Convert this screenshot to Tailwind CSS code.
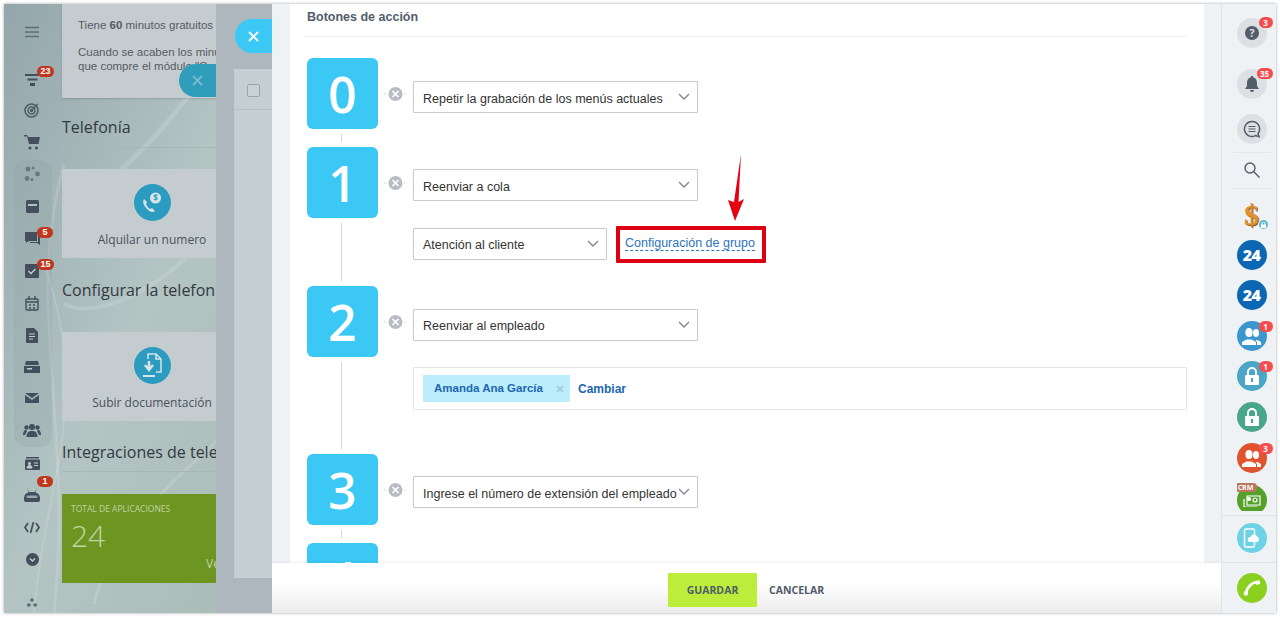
<!DOCTYPE html>
<html lang="es">
<head>
<meta charset="utf-8">
<script src="https://cdn.jsdelivr.net/npm/@tailwindcss/browser@4"></script>
<title>Botones de acción</title>
</head>
<body class="bg-white">
<div class="w-[1280px] h-[618px] bg-white overflow-hidden pt-[4px] pl-[4px] font-['Liberation_Sans',sans-serif]">
<div class="w-[1272px] h-[609px] flex overflow-hidden shadow-[0_0_3px_rgba(0,0,0,0.35)]">

  <!-- dimmed left area -->
  <div class="relative w-[268px] h-full flex bg-gradient-to-br from-[#93a6ab] via-[#b3c4c3] to-[#a9bab6] overflow-hidden">
    <svg class="absolute inset-0" width="268" height="609" fill="none" stroke="#ffffff" stroke-opacity="0.14"><path d="M50 609C70 420 20 300 60 160" stroke-width="3"/><path d="M30 609C40 480 90 400 40 260" stroke-width="2"/><path d="M60 210C120 170 170 120 220 40" stroke-width="5"/><path d="M60 300C100 320 180 270 220 210" stroke-width="4"/><path d="M90 600C110 520 180 470 220 430" stroke-width="3"/></svg>
    <div class="absolute left-[10px] top-[156px] w-[38px] h-[287px] rounded-[12px] bg-[#8fa0a5]/25"></div>

    <!-- sidebar icons -->
    <nav class="relative w-[56px] shrink-0 flex flex-col items-center pt-[12px] text-[#4b5563] *:shrink-0">
      <div class="h-8 w-8 flex items-center justify-center">
        <svg width="16" height="12" fill="none" stroke="#5f6b75" stroke-width="1.6"><path d="M1 1.5h14M1 6h14M1 10.5h14"/></svg>
      </div>
      <div class="relative h-8 w-8 mt-4 flex items-center justify-center">
        <svg width="15" height="12" fill="#444e5c"><path d="M0 0h15v2H0zM2.500 4.500h10v2h-10zM5 9h5v3H5z"/></svg>
        <span class="absolute left-[21px] top-[2px] h-[11px] w-[17px] rounded-full bg-[#c1361d] text-white text-[9px] leading-[11px] text-center font-bold">23</span>
      </div>
      <div class="h-8 w-8 -mt-[2px] flex items-center justify-center">
        <svg width="16" height="16" viewBox="0 0 16 16" fill="none" stroke="#515c69" stroke-width="1.5"><circle cx="7.500" cy="8.500" r="6.500"/><circle cx="7.500" cy="8.500" r="3.500"/><circle cx="7.500" cy="8.500" r="1" fill="#515c69"/><path d="M8 8l6-6" /></svg>
      </div>
      <div class="h-8 w-8 flex items-center justify-center">
        <svg width="16" height="15" viewBox="0 0 16 15" fill="#444e5c"><path d="M0 0h3l1 2h12l-1.500 7H5L3 1.500H0z"/><circle cx="6" cy="13" r="1.500"/><circle cx="12.500" cy="13" r="1.500"/></svg>
      </div>
      <div class="h-8 w-8 flex items-center justify-center">
        <svg width="16" height="16" viewBox="0 0 16 16" fill="#6b7681"><circle cx="4" cy="3" r="2.400"/><circle cx="13.500" cy="8" r="2.400"/><circle cx="3" cy="12.500" r="2.400"/><circle cx="9" cy="2" r="1.500"/><circle cx="8" cy="13.500" r="1.500"/></svg>
      </div>
      <div class="h-8 w-8 flex items-center justify-center">
        <svg width="13" height="13" viewBox="0 0 13 13"><rect width="13" height="13" rx="1.500" fill="#444e5c"/><rect x="2" y="4" width="9" height="2" fill="#b5c2c4"/></svg>
      </div>
      <div class="relative h-8 w-8 mt-[1px] flex items-center justify-center">
        <svg width="15" height="14" viewBox="0 0 15 14" fill="#444e5c"><path d="M0 0h12v9H4l-3 2V9H0z"/><path d="M13 3h2v10l-3-2H5v-1h8z"/></svg>
        <span class="absolute left-[21px] top-[4px] h-[11px] w-[16px] rounded-full bg-[#c1361d] text-white text-[9px] leading-[11px] text-center font-bold">5</span>
      </div>
      <div class="relative h-8 w-8 flex items-center justify-center">
        <svg width="14" height="14" viewBox="0 0 14 14"><rect width="14" height="14" rx="1" fill="#444e5c"/><path d="M3.500 7l2.500 2.500 4.500-4.500" fill="none" stroke="#c4d0d0" stroke-width="1.400"/></svg>
        <span class="absolute left-[21px] top-[4px] h-[11px] w-[17px] rounded-full bg-[#c1361d] text-white text-[9px] leading-[11px] text-center font-bold">15</span>
      </div>
      <div class="h-8 w-8 flex items-center justify-center">
        <svg width="14" height="15" viewBox="0 0 14 15" fill="none" stroke="#444e5c" stroke-width="1.400"><rect x="1" y="3" width="12" height="11" rx="1"/><path d="M1 6h12M4 0v3M10 0v3M4 9h2M8 9h2M4 12h2M8 12h2"/></svg>
      </div>
      <div class="h-8 w-8 flex items-center justify-center">
        <svg width="12" height="15" viewBox="0 0 12 15"><path d="M1 0h7l4 4v10a1 1 0 0 1-1 1H1a1 1 0 0 1-1-1V1a1 1 0 0 1 1-1z" fill="#444e5c"/><path d="M3 6h6M3 8.500h6M3 11h4" stroke="#c0cdcd"/></svg>
      </div>
      <div class="h-8 w-8 flex items-center justify-center">
        <svg width="16" height="12" viewBox="0 0 16 12" fill="#444e5c"><path d="M2 0h12l1 4H1z"/><path d="M0 5h16v7H0z"/><rect x="3" y="7" width="5" height="1.500" fill="#c0cdcd"/></svg>
      </div>
      <div class="h-8 w-8 -mt-[1px] flex items-center justify-center">
        <svg width="14" height="10" viewBox="0 0 14 10" fill="#444e5c"><path d="M0 0h14L7 5z"/><path d="M0 2l7 5 7-5v8H0z"/></svg>
      </div>
      <div class="h-8 w-8 flex items-center justify-center">
        <svg width="18" height="13" viewBox="0 0 18 13" fill="#444e5c"><circle cx="9" cy="3" r="3"/><path d="M3.500 13c0-4 2-6 5.500-6s5.500 2 5.500 6z"/><circle cx="3.500" cy="3.500" r="2.200"/><circle cx="14.500" cy="3.500" r="2.200"/><path d="M0 11c0-3 1-5 3-5l1 1-2 4zM18 11c0-3-1-5-3-5l-1 1 2 4z"/></svg>
      </div>
      <div class="h-8 w-8 mt-[1px] flex items-center justify-center">
        <svg width="15" height="13" viewBox="0 0 15 13"><path d="M1 0h13v1.500H1z" fill="#444e5c"/><rect y="2.500" width="15" height="10.500" rx="1" fill="#444e5c"/><circle cx="4.500" cy="6.500" r="1.500" fill="#c0cdcd"/><path d="M2 11c0-2 1-2.500 2.500-2.500S7 9 7 11zM9 6h4M9 8.500h4" fill="#c0cdcd" stroke="#c0cdcd"/></svg>
      </div>
      <div class="relative h-8 w-8 flex items-center justify-center">
        <svg width="16" height="14" viewBox="0 0 16 14"><path d="M3 0l2 4h6l2-4-1.500 4.500C14 5 16 7 16 10v2a2 2 0 0 1-2 2H2a2 2 0 0 1-2-2v-2c0-3 2-5 4.500-5.500z" fill="#444e5c"/><rect x="2.500" y="7.500" width="11" height="2.500" rx="1.200" fill="#98a5aa"/></svg>
        <span class="absolute left-[21px] top-[-3px] h-[11px] w-[16px] rounded-full bg-[#c1361d] text-white text-[9px] leading-[11px] text-center font-bold">1</span>
      </div>
      <div class="h-8 w-8 flex items-center justify-center">
        <svg width="16" height="11" viewBox="0 0 16 11" fill="none" stroke="#444e5c" stroke-width="1.700"><path d="M4 1L1 5.500 4 10M12 1l3 4.500L12 10M9.500 0L6.500 11"/></svg>
      </div>
      <div class="h-8 w-8 flex items-center justify-center">
        <svg width="13" height="13" viewBox="0 0 13 13"><circle cx="6.500" cy="6.500" r="6.500" fill="#444e5c"/><path d="M4 5.500l2.500 2.500L9 5.500" fill="none" stroke="#c0cdcd" stroke-width="1.500"/></svg>
      </div>
      <div class="h-8 w-8 mt-[11px] flex items-center justify-center">
        <svg width="10" height="9" viewBox="0 0 10 9" fill="#5d6874"><circle cx="5" cy="2" r="1.800"/><circle cx="1.800" cy="7" r="1.800"/><circle cx="8.200" cy="7" r="1.800"/></svg>
      </div>
    </nav>

    <!-- main column behind -->
    <main class="relative w-[156px] shrink-0 pl-[2px] overflow-hidden font-['Open_Sans',sans-serif]">
      <div class="h-[94px] bg-[#c5cccf] shadow-[0_1px_2px_rgba(0,0,0,0.15)] pt-[14px] pl-[16px] text-[11.500px] leading-[14px] text-[#555b63] whitespace-nowrap font-['Liberation_Sans',sans-serif]">
        <p>Tiene <b>60</b> minutos gratuitos</p>
        <p class="mt-[13px]">Cuando se acaben los minutos</p>
        <p>que compre el módulo "Central"</p>
      </div>
      <h2 class="mt-[17px] text-[16px] leading-[24px] text-[#333a40] whitespace-nowrap">Telefonía</h2>
      <div class="mt-[8px] h-px bg-[#a9b6b6]"></div>
      <div class="mt-[21px] h-[89px] bg-[#c5cccf] flex flex-col items-center pt-[15px] w-[180px]">
        <div class="w-[37px] h-[37px] rounded-full bg-[#2b9cc0] flex items-center justify-center">
          <svg width="22" height="22" viewBox="0 0 22 22"><path d="M3 7c-2 3 0 7 3 10s6 4 8 2l-3-3-2 1c-2-1-3-3-4-5l1-2z" fill="#d7e4e8"/><circle cx="14.500" cy="6" r="5.500" fill="#d7e4e8"/><text x="14.500" y="9" font-size="8" font-weight="700" text-anchor="middle" fill="#2b9cc0" font-family="Open Sans">$</text></svg>
        </div>
        <span class="mt-[10px] text-[12px] leading-[18px] text-[#48525e] whitespace-nowrap">Alquilar un numero</span>
      </div>
      <h2 class="mt-[20px] text-[16px] leading-[24px] text-[#333a40] whitespace-nowrap">Configurar la telefonía</h2>
      <div class="mt-[30px] h-[89px] bg-[#c5cccf] flex flex-col items-center pt-[15px] w-[180px]">
        <div class="w-[37px] h-[37px] rounded-full bg-[#2b9cc0] flex items-center justify-center">
          <svg width="22" height="26" viewBox="0 0 22 26" fill="none" stroke="#d7e4e8" stroke-width="1.500"><path d="M7 6V1h8l5 5v13h-5M15 1v5h5"/><path d="M8 8v8M4 12l4 5 4-5" stroke-width="2.500"/><path d="M2 23h12" stroke-width="2"/></svg>
        </div>
        <span class="mt-[10px] text-[12px] leading-[18px] text-[#48525e] whitespace-nowrap">Subir documentación</span>
      </div>
      <h2 class="mt-[19px] text-[16px] leading-[24px] text-[#333a40] whitespace-nowrap">Integraciones de telefonía</h2>
      <div class="mt-[7px] h-px bg-[#a9b6b6]"></div>
      <div class="mt-[22px] h-[89px] w-[180px] bg-[#6c9621] relative pl-[9px] pt-[9px] text-[#c3d3a3]">
        <div class="text-[8.500px] leading-[12px] whitespace-nowrap">TOTAL DE APLICACIONES</div>
        <div class="mt-[3px] text-[30px] leading-[36px] font-light">24</div>
        <div class="absolute left-[144px] top-[62px] text-[12px] leading-[16px] whitespace-nowrap">Ver</div>
      </div>
    </main>

    <!-- second slider layer -->
    <div class="relative flex-1 bg-[#adb7bd] pl-[18px] pt-[65px]">
      <div class="h-[509px] bg-[#c5ced2]">
        <div class="h-[41px] border-b border-[#b8c2c6] pl-[13px] pt-[15px]">
          <div class="w-[13px] h-[13px] rounded-[2px] border border-[#9aa4a9] bg-[#c9d1d5]"></div>
        </div>
      </div>
    </div>

    <button class="absolute left-[175px] top-[60px] w-[37px] h-[33px] rounded-l-full bg-[#2f9dbb] flex items-center justify-center">
      <svg width="11" height="11" fill="none" stroke="#76bdd1" stroke-width="1.800"><path d="M1 1l9 9M10 1l-9 9"/></svg>
    </button>
    <button class="absolute left-[231px] top-[15px] w-[37px] h-[34px] rounded-l-full bg-[#3bc8f5] flex items-center justify-center">
      <svg width="11" height="11" fill="none" stroke="#ffffff" stroke-width="1.800"><path d="M1 1l9 9M10 1l-9 9"/></svg>
    </button>
  </div>

  <!-- active panel -->
  <section class="relative w-[949px] h-full bg-[#eef2f4] pl-[18px] pr-[17px] overflow-hidden">
    <div class="h-full bg-white pl-[14px] pr-[17px]">
      <h3 class="pl-[3px] pt-[6px] text-[12.500px] leading-[15px] font-bold text-[#535c69]">Botones de acción</h3>
      <div class="mt-[11px] h-px bg-[#eef0f2]"></div>

      <div class="mt-[21px] pl-[3px]">
        <!-- 0 -->
        <div class="flex h-[89px]">
          <div class="flex flex-col w-[71px] shrink-0">
            <div class="w-[71px] h-[71px] shrink-0 rounded-[6px] bg-[#3bc8f5] text-white text-[50px] font-semibold leading-[73px] text-center font-['Open_Sans',sans-serif]">0</div>
            <div class="ml-[34px] w-px flex-1 my-[5px] bg-[#d5d9dd]"></div>
          </div>
          <div class="w-[35px] shrink-0 pt-[29px] pl-[6px] flex items-start">
            <svg width="23" height="14" viewBox="0 0 23 14"><path d="M0 7h3M20 7h3" stroke="#c0c4c9" stroke-dasharray="1 1.500"/><circle cx="11.500" cy="7" r="7" fill="#b9bdc3"/><path d="M8.500 4l6 6M14.500 4l-6 6" stroke="#fff" stroke-width="1.700"/></svg>
          </div>
          <div class="pt-[23px]">
            <div class="w-[285px] h-[32px] border border-[#c6cdd3] rounded-[1px] shadow-[0_0_1px_rgba(83,92,105,0.2)] flex items-center justify-between pl-[9px] pr-[7px] text-[12.500px] text-[#333]">
              <span class="whitespace-nowrap pt-[4px]">Repetir la grabación de los menús actuales</span>
              <svg class="mb-[2px]" width="12" height="7" fill="none" stroke="#7f8792" stroke-width="1.400"><path d="M1 1l5 5 5-5"/></svg>
            </div>
          </div>
        </div>
        <!-- 1 -->
        <div class="flex h-[139px]">
          <div class="flex flex-col w-[71px] shrink-0">
            <div class="w-[71px] h-[71px] shrink-0 rounded-[6px] bg-[#3bc8f5] text-white text-[50px] font-semibold leading-[73px] text-center font-['Open_Sans',sans-serif]">1</div>
            <div class="ml-[34px] w-px flex-1 my-[5px] bg-[#d5d9dd]"></div>
          </div>
          <div class="w-[35px] shrink-0 pt-[29px] pl-[6px] flex items-start">
            <svg width="23" height="14" viewBox="0 0 23 14"><path d="M0 7h3M20 7h3" stroke="#c0c4c9" stroke-dasharray="1 1.500"/><circle cx="11.500" cy="7" r="7" fill="#b9bdc3"/><path d="M8.500 4l6 6M14.500 4l-6 6" stroke="#fff" stroke-width="1.700"/></svg>
          </div>
          <div class="pt-[22px]">
            <div class="w-[285px] h-[32px] border border-[#c6cdd3] rounded-[1px] shadow-[0_0_1px_rgba(83,92,105,0.2)] flex items-center justify-between pl-[9px] pr-[7px] text-[12.500px] text-[#333]">
              <span class="pt-[4px]">Reenviar a cola</span>
              <svg class="mb-[2px]" width="12" height="7" fill="none" stroke="#7f8792" stroke-width="1.400"><path d="M1 1l5 5 5-5"/></svg>
            </div>
            <div class="mt-[27px] flex items-start relative">
              <div class="w-[194px] h-[32px] border border-[#c6cdd3] rounded-[1px] shadow-[0_0_1px_rgba(83,92,105,0.2)] flex items-center justify-between pl-[9px] pr-[7px] text-[12.500px] text-[#333]">
                <span class="pt-[2px]">Atención al cliente</span>
                <svg class="mb-[2px]" width="12" height="7" fill="none" stroke="#7f8792" stroke-width="1.400"><path d="M1 1l5 5 5-5"/></svg>
              </div>
              <div class="-mt-[2px] ml-[9px] w-[150px] h-[37px] border-[4px] border-[#dd0012] rounded-[1px] pl-[5px] pt-[6px] text-[12.500px] leading-[15px] text-[#2f74c0] whitespace-nowrap">
                <span class="border-b border-dashed border-[#2f74c0]">Configuración de grupo</span>
              </div>
              <svg class="absolute left-[312px] top-[-74px]" width="24" height="68" viewBox="0 0 24 68" fill="#e60012"><path d="M16 0L13.500 48 19 45 10 67 3 46 9 48z"/></svg>
            </div>
          </div>
        </div>
        <!-- 2 -->
        <div class="flex h-[168px]">
          <div class="flex flex-col w-[71px] shrink-0">
            <div class="w-[71px] h-[71px] shrink-0 rounded-[6px] bg-[#3bc8f5] text-white text-[50px] font-semibold leading-[73px] text-center font-['Open_Sans',sans-serif]">2</div>
            <div class="ml-[34px] w-px flex-1 my-[5px] bg-[#d5d9dd]"></div>
          </div>
          <div class="w-[35px] shrink-0 pt-[29px] pl-[6px] flex items-start">
            <svg width="23" height="14" viewBox="0 0 23 14"><path d="M0 7h3M20 7h3" stroke="#c0c4c9" stroke-dasharray="1 1.500"/><circle cx="11.500" cy="7" r="7" fill="#b9bdc3"/><path d="M8.500 4l6 6M14.500 4l-6 6" stroke="#fff" stroke-width="1.700"/></svg>
          </div>
          <div class="pt-[23px]">
            <div class="w-[285px] h-[32px] border border-[#c6cdd3] rounded-[1px] shadow-[0_0_1px_rgba(83,92,105,0.2)] flex items-center justify-between pl-[9px] pr-[7px] text-[12.500px] text-[#333]">
              <span class="pt-[3px]">Reenviar al empleado</span>
              <svg class="mb-[2px]" width="12" height="7" fill="none" stroke="#7f8792" stroke-width="1.400"><path d="M1 1l5 5 5-5"/></svg>
            </div>
            <div class="mt-[26px] w-[774px] h-[43px] border border-[#e3e6e9] flex items-center pl-[9px]">
              <div class="w-[147px] h-[27px] bg-[#bcedfc] flex items-center justify-between pl-[11px] pr-[6px] text-[11.500px] font-bold text-[#2067b0]">
                <span class="whitespace-nowrap">Amanda Ana García</span>
                <svg width="8" height="8" fill="none" stroke="#a4cfdc" stroke-width="1.800"><path d="M1 1l6 6M7 1l-6 6"/></svg>
              </div>
              <span class="ml-[8px] text-[12px] font-bold text-[#2067b0]">Cambiar</span>
            </div>
          </div>
        </div>
        <!-- 3 -->
        <div class="flex h-[89px]">
          <div class="flex flex-col w-[71px] shrink-0">
            <div class="w-[71px] h-[71px] shrink-0 rounded-[6px] bg-[#3bc8f5] text-white text-[50px] font-semibold leading-[73px] text-center font-['Open_Sans',sans-serif]">3</div>
            <div class="ml-[34px] w-px flex-1 my-[5px] bg-[#d5d9dd]"></div>
          </div>
          <div class="w-[35px] shrink-0 pt-[29px] pl-[6px] flex items-start">
            <svg width="23" height="14" viewBox="0 0 23 14"><path d="M0 7h3M20 7h3" stroke="#c0c4c9" stroke-dasharray="1 1.500"/><circle cx="11.500" cy="7" r="7" fill="#b9bdc3"/><path d="M8.500 4l6 6M14.500 4l-6 6" stroke="#fff" stroke-width="1.700"/></svg>
          </div>
          <div class="pt-[22px]">
            <div class="w-[285px] h-[32px] border border-[#c6cdd3] rounded-[1px] shadow-[0_0_1px_rgba(83,92,105,0.2)] flex items-center justify-between pl-[9px] pr-[7px] text-[12.500px] text-[#333]">
              <span class="whitespace-nowrap pt-[4px]">Ingrese el número de extensión del empleado</span>
              <svg class="shrink-0 mb-[2px]" width="12" height="7" fill="none" stroke="#7f8792" stroke-width="1.400"><path d="M1 1l5 5 5-5"/></svg>
            </div>
          </div>
        </div>
        <!-- 4 -->
        <div class="w-[71px] h-[71px] rounded-[6px] bg-[#3bc8f5] text-white text-[50px] font-semibold leading-[73px] text-center font-['Open_Sans',sans-serif]">4</div>
      </div>
    </div>

    <footer class="absolute left-0 right-0 bottom-0 h-[50px] bg-gradient-to-b from-white from-40% to-[#ececec] shadow-[0_-1px_2px_rgba(0,0,0,0.06)] flex items-center pl-[396px] pt-[4px] font-['Open_Sans',sans-serif] text-[10.500px] font-bold text-[#535c69]">
      <span class="w-[89px] h-[34px] bg-[#bbed3a] rounded-[1px] flex items-center justify-center pt-[1px]">GUARDAR</span>
      <span class="ml-[12px] pt-[1px]">CANCELAR</span>
    </footer>
  </section>

  <!-- right bar -->
  <aside class="flex-1 bg-[#eef2f4] border-l border-[#dfe5e8] pl-[5px] flex flex-col items-center font-['Open_Sans',sans-serif]">
    <div class="relative mt-[14px] w-[30px] h-[30px] rounded-full bg-[#dde0e3] flex items-center justify-center">
      <svg width="14" height="14" viewBox="0 0 14 14"><circle cx="7" cy="7" r="7" fill="#535c69"/><text x="7" y="11" font-size="10.500" font-weight="700" fill="#dde0e3" text-anchor="middle" font-family="Open Sans">?</text></svg>
      <span class="absolute left-[22px] top-[-1px] w-[14px] h-[11px] rounded-full bg-[#f54d4d] text-white text-[8px] leading-[11px] text-center font-bold">3</span>
    </div>
    <div class="relative mt-[21px] w-[30px] h-[30px] rounded-full bg-[#dde0e3] flex items-center justify-center">
      <svg width="14" height="16" viewBox="0 0 14 16" fill="#535c69"><path d="M7 0c1 0 1.500.7 1.500 1.500C11 2.200 12 4.500 12 7v3l2 3H0l2-3V7c0-2.500 1-4.800 3.500-5.500C5.500.7 6 0 7 0z"/><path d="M5 14h4a2 2 0 0 1-4 0z"/></svg>
      <span class="absolute left-[20px] top-[-1px] w-[16px] h-[11px] rounded-full bg-[#f54d4d] text-white text-[8px] leading-[11px] text-center font-bold">35</span>
    </div>
    <div class="mt-[15px] w-[30px] h-[30px] rounded-full bg-[#dde0e3] flex items-center justify-center">
      <svg width="18" height="18" viewBox="0 0 18 18" fill="none" stroke="#535c69" stroke-width="1.500"><path d="M9 1.500a7.500 7.500 0 1 0 3.500 14.100l3.500 1-1-3A7.500 7.500 0 0 0 9 1.500z"/><path d="M5.500 6.500h7M5.500 9h7M5.500 11.500h7" stroke-width="1.200"/></svg>
    </div>
    <div class="mt-[8px] w-[38px] h-px bg-[#e2e6e9]"></div>
    <div class="h-[35px] flex items-center justify-center -mt-[1px] mb-[1px]">
      <svg width="16" height="16" viewBox="0 0 16 16" fill="none" stroke="#535c69" stroke-width="1.400"><circle cx="6" cy="6" r="5"/><path d="M9.800 9.800L15.500 15.500"/></svg>
    </div>
    <div class="w-[38px] h-px bg-[#e2e6e9]"></div>
    <div class="relative mt-[11px] w-[30px] h-[30px] flex justify-center">
      <span class="font-['Liberation_Serif',serif] font-bold text-[30px] leading-[29px] text-[#e0912b] [text-shadow:1px_1px_0_#8a5a1c]">$</span>
      <span class="absolute left-[21px] top-[19px] w-[11px] h-[11px] rounded-full bg-[#5cb7cf] border border-white flex items-center justify-center">
        <svg width="5" height="6" viewBox="0 0 5 6"><rect y="2.500" width="5" height="3.500" fill="#fff"/><path d="M1 3V1.500a1.500 1.500 0 0 1 3 0V3" fill="none" stroke="#fff"/></svg>
      </span>
    </div>
    <div class="mt-[10px] w-[30px] h-[30px] rounded-full bg-[#0b66b3] text-white font-extrabold text-[16px] leading-[30px] text-center tracking-[-0.5px]">24</div>
    <div class="mt-[10px] w-[30px] h-[30px] rounded-full bg-[#0b66b3] text-white font-extrabold text-[16px] leading-[30px] text-center tracking-[-0.5px]">24</div>
    <div class="relative mt-[11px] w-[30px] h-[30px] rounded-full bg-[#3d97cf] flex items-center justify-center">
      <svg width="19" height="17" viewBox="0 0 19 17" fill="#fff"><ellipse cx="7" cy="4.500" rx="3.600" ry="4.500"/><path d="M0 17v-3l4.500-2.500h5L14 14v3z"/><ellipse cx="14" cy="5" rx="3" ry="4"/><path d="M15 17h4v-3l-3.500-2-2 .5 1.500 1.500z"/></svg>
      <span class="absolute left-[22px] top-[0px] w-[14px] h-[11px] rounded-full bg-[#f54d4d] text-white text-[8px] leading-[11px] text-center font-bold">1</span>
    </div>
    <div class="relative mt-[10px] w-[30px] h-[30px] rounded-full bg-[#4ba5c6] flex items-center justify-center">
      <svg width="14" height="18" viewBox="0 0 14 18"><path d="M3 8V5a4 4 0 0 1 8 0v3" fill="none" stroke="#fff" stroke-width="2"/><rect y="8" width="14" height="10" rx="1" fill="#fff"/><rect x="6" y="11" width="2" height="4" fill="#4ba5c6"/></svg>
      <span class="absolute left-[22px] top-[0px] w-[14px] h-[11px] rounded-full bg-[#f54d4d] text-white text-[8px] leading-[11px] text-center font-bold">1</span>
    </div>
    <div class="mt-[11px] w-[30px] h-[30px] rounded-full bg-[#48a78b] flex items-center justify-center">
      <svg width="14" height="18" viewBox="0 0 14 18"><path d="M3 8V5a4 4 0 0 1 8 0v3" fill="none" stroke="#fff" stroke-width="2"/><rect y="8" width="14" height="10" rx="1" fill="#fff"/><rect x="6" y="11" width="2" height="4" fill="#48a78b"/></svg>
    </div>
    <div class="relative mt-[11px] w-[30px] h-[30px] rounded-full bg-[#e0532f] flex items-center justify-center">
      <svg width="19" height="17" viewBox="0 0 19 17" fill="#fff"><ellipse cx="7" cy="4.500" rx="3.600" ry="4.500"/><path d="M0 17v-3l4.500-2.500h5L14 14v3z"/><ellipse cx="14" cy="5" rx="3" ry="4"/><path d="M15 17h4v-3l-3.500-2-2 .5 1.500 1.500z"/></svg>
      <span class="absolute left-[22px] top-[0px] w-[14px] h-[11px] rounded-full bg-[#f54d4d] text-white text-[8px] leading-[11px] text-center font-bold">3</span>
    </div>
    <div class="relative mt-[10px] w-[30px] h-[28px] overflow-hidden">
      <div class="absolute top-[2px] left-0 w-[30px] h-[30px] rounded-full bg-[#55a02a] flex items-center justify-center">
        <svg width="18" height="14" viewBox="0 0 18 14" fill="none" stroke="#fff" stroke-width="1.200"><path d="M4 3h13v9H4zM1 6v8h13"/><circle cx="6" cy="6" r="1.500" fill="#fff"/><circle cx="12" cy="7" r="2"/></svg>
      </div>
      <span class="absolute top-0 left-[-2px] w-[22px] h-[9px] rounded-[4px] bg-[#b9765d] text-white text-[7px] leading-[9px] text-center font-bold">CRM</span>
    </div>
    <div class="mt-[4px] self-stretch -ml-[5px] h-px bg-[#dfe5e8]"></div>
    <div class="mt-[7px] w-[30px] h-[30px] rounded-full bg-[#6cd2e4] flex items-center justify-center">
      <svg width="18" height="20" viewBox="0 0 18 20"><rect x="1.500" y="1" width="10" height="18" rx="1.500" fill="none" stroke="#fff" stroke-width="1.500"/><path d="M7 14a2.500 2.500 0 0 1 .5-5 3.500 3.500 0 0 1 6.500-.5A3 3 0 0 1 14.500 14z" fill="#fff"/></svg>
    </div>
    <div class="mt-[9px] self-stretch -ml-[5px] h-px bg-[#dfe5e8]"></div>
    <div class="mt-[10px] w-[30px] h-[30px] rounded-full bg-[#8bd01f] flex items-center justify-center">
      <svg width="18" height="18" viewBox="0 0 18 18" fill="#fff" stroke="#fff"><path d="M3 15C3 9 9 3 15 3" fill="none" stroke-width="2.500"/><rect x="1" y="12" width="4" height="4.500" rx="1" stroke="none" transform="rotate(15 3 14)"/><rect x="12.500" y="1.500" width="4.500" height="4" rx="1" stroke="none" transform="rotate(-15 15 3.500)"/></svg>
    </div>
  </aside>
</div>
</div>
</body>
</html>
